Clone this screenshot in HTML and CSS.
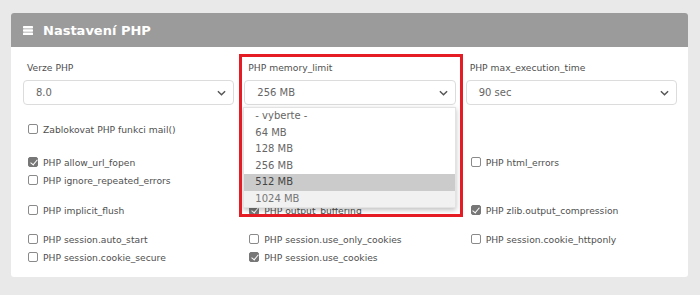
FILE: index.html
```html
<!DOCTYPE html>
<html lang="cs">
<head>
<meta charset="utf-8">
<title>Nastavení PHP</title>
<link rel="stylesheet" href="styles.css">
</head>
<body>
<div class="card">
  <div class="card-head">
    <svg class="head-icon" viewBox="0 0 10 9" width="10" height="9" aria-hidden="true">
      <rect x="0" y="0" width="10" height="2.4" rx="0.6" fill="#fff"/>
      <rect x="0" y="3.3" width="10" height="2.4" rx="0.6" fill="#fff"/>
      <rect x="0" y="6.6" width="10" height="2.4" rx="0.6" fill="#fff"/>
    </svg>
    <span class="head-title">Nastavení PHP</span>
  </div>
  <div class="card-body">
    <div class="grid">
      <div class="col">
        <label class="field-label">Verze PHP</label>
        <div class="select"><span>8.0</span><svg class="chev" viewBox="0 0 10 6" width="9" height="6"><path d="M1 1l4 4 4-4" fill="none" stroke="#555" stroke-width="1.6"/></svg></div>
      </div>
      <div class="col col-mid">
        <label class="field-label">PHP memory_limit</label>
        <div class="select"><span>256 MB</span><svg class="chev" viewBox="0 0 10 6" width="9" height="6"><path d="M1 1l4 4 4-4" fill="none" stroke="#555" stroke-width="1.6"/></svg></div>
        <ul class="dropdown">
          <li>- vyberte -</li>
          <li>64 MB</li>
          <li>128 MB</li>
          <li>256 MB</li>
          <li class="hover">512 MB</li>
          <li class="last">1024 MB</li>
        </ul>
        <div class="highlight"></div>
      </div>
      <div class="col">
        <label class="field-label">PHP max_execution_time</label>
        <div class="select"><span>90 sec</span><svg class="chev" viewBox="0 0 10 6" width="9" height="6"><path d="M1 1l4 4 4-4" fill="none" stroke="#555" stroke-width="1.6"/></svg></div>
      </div>
    </div>

    <div class="grid row-mail">
      <div class="col">
        <div class="check"><span class="box"></span>Zablokovat PHP funkci mail()</div>
      </div>
    </div>

    <div class="grid row-1">
      <div class="col">
        <div class="check"><span class="box on"></span>PHP allow_url_fopen</div>
        <div class="check"><span class="box"></span>PHP ignore_repeated_errors</div>
      </div>
      <div class="col"></div>
      <div class="col">
        <div class="check"><span class="box"></span>PHP html_errors</div>
      </div>
    </div>

    <div class="grid row-2">
      <div class="col">
        <div class="check"><span class="box"></span>PHP implicit_flush</div>
      </div>
      <div class="col">
        <div class="check"><span class="box on"></span>PHP output_buffering</div>
      </div>
      <div class="col">
        <div class="check"><span class="box on"></span>PHP zlib.output_compression</div>
      </div>
    </div>

    <div class="grid row-3">
      <div class="col">
        <div class="check"><span class="box"></span>PHP session.auto_start</div>
        <div class="check"><span class="box"></span>PHP session.cookie_secure</div>
      </div>
      <div class="col">
        <div class="check"><span class="box"></span>PHP session.use_only_cookies</div>
        <div class="check"><span class="box on"></span>PHP session.use_cookies</div>
      </div>
      <div class="col">
        <div class="check"><span class="box"></span>PHP session.cookie_httponly</div>
      </div>
    </div>
  </div>
</div>
</body>
</html>
```
FILE: styles.css
```css
* { box-sizing: border-box; }
html, body { margin: 0; padding: 0; }
body {
  background: #e9e9e9;
  font-family: "DejaVu Sans", sans-serif;
  font-size: 9.2px;
  color: #4f4f4f;
  padding: 13px 12px 0 11px;
  width: 700px;
  height: 295px;
  overflow: hidden;
}
.card {
  width: 677px;
  background: #fff;
  border-radius: 3px;
}
.card-head {
  height: 34px;
  background: #9b9b9b;
  border-radius: 3px 3px 0 0;
  display: flex;
  align-items: center;
  padding-left: 12px;
  gap: 10px;
}
.head-title {
  color: #fff;
  font-size: 13px;
  font-weight: bold;
}
.card-body {
  padding: 15px 11px 11px 12px;
}
.grid {
  display: grid;
  grid-template-columns: repeat(3, 1fr);
  column-gap: 10px;
}
.col { position: relative; }
.field-label {
  display: block;
  height: 12px;
  line-height: 12px;
  margin-bottom: 6px;
  padding-left: 4px;
  color: #4f4f4f;
}
.select {
  height: 25px;
  border: 1px solid #dcdcdc;
  border-radius: 4px;
  display: flex;
  align-items: center;
  justify-content: space-between;
  padding: 0 7px 0 12px;
  color: #666;
  font-size: 10px;
}
.dropdown {
  position: absolute;
  left: -1px;
  top: 45px;
  width: 213px;
  margin: 0;
  padding: 0;
  list-style: none;
  background: #fff;
  box-shadow: 0 2px 5px rgba(0,0,0,0.25);
  border: 1px solid #e3e3e3;
  z-index: 2;
}
.dropdown li {
  height: 16.5px;
  line-height: 16.5px;
  padding-left: 11px;
  color: #666;
  font-size: 10px;
}
.dropdown li.hover { background: #cbcbcb; color: #444; }
.dropdown li.last { background: #f1f1f1; color: #777; }
.highlight {
  position: absolute;
  left: -5px;
  top: -8px;
  width: 224px;
  height: 163px;
  border: 3px solid #e51c24;
  z-index: 3;
  pointer-events: none;
}
.row-mail { margin-top: 15px; }
.row-1 { margin-top: 15px; }
.row-2 { margin-top: 12px; }
.row-3 { margin-top: 11px; }
.check {
  height: 18px;
  display: flex;
  align-items: center;
  padding-left: 5px;
  gap: 5px;
  color: #4f4f4f;
}
.box {
  width: 10px;
  height: 10px;
  border: 1px solid #8a8a8a;
  border-radius: 2px;
  flex: none;
  position: relative;
}
.box.on {
  background: #777;
  border-color: #777;
}
.box.on::after {
  content: "";
  position: absolute;
  left: 2.5px;
  top: 0px;
  width: 3px;
  height: 6px;
  border: solid #fff;
  border-width: 0 1.6px 1.6px 0;
  transform: rotate(40deg);
}
```
